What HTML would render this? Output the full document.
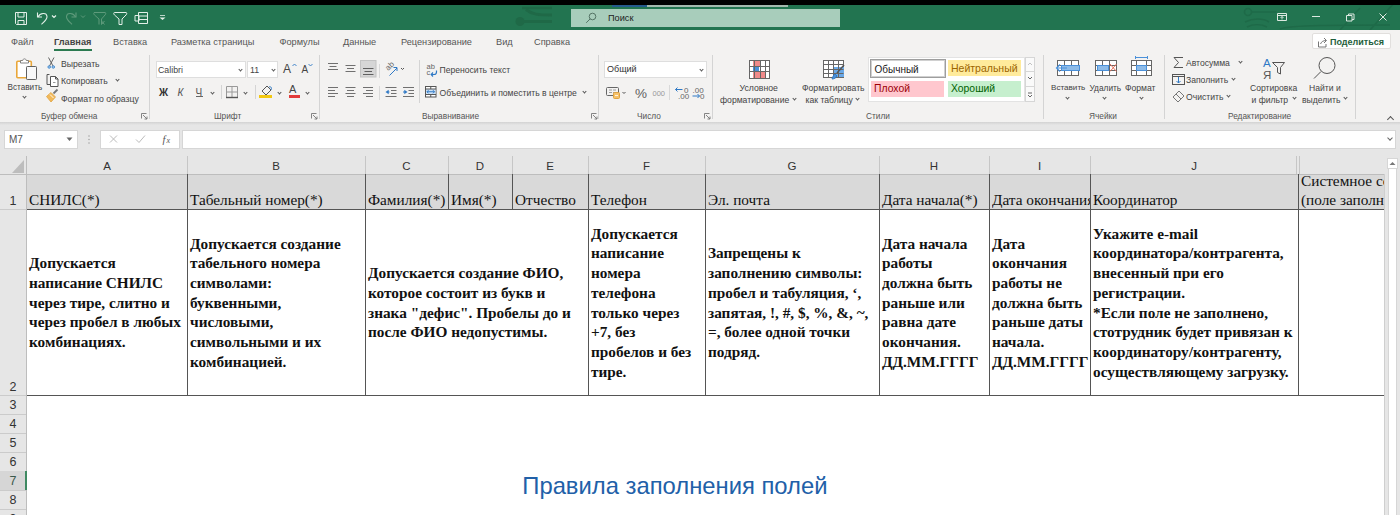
<!DOCTYPE html>
<html><head><meta charset="utf-8">
<style>
*{margin:0;padding:0;box-sizing:border-box}
html,body{width:1400px;height:515px;overflow:hidden;background:#fff;font-family:"Liberation Sans",sans-serif}
.a{position:absolute}
svg{position:absolute;overflow:visible}
.t{position:absolute;white-space:nowrap;color:#444;font-size:8.7px;line-height:10px}
.tab{position:absolute;top:37px;font-size:9.2px;line-height:11px;color:#555;white-space:nowrap}
.gl{position:absolute;top:111px;font-size:8.3px;line-height:10px;color:#555;white-space:nowrap}
.sep{position:absolute;width:1px;background:#d4d4d4}
.ch{position:absolute;width:4px;height:4px;border-right:1px solid #555;border-bottom:1px solid #555;transform:rotate(45deg)}
.cl{position:absolute;top:159px;font-size:11.5px;line-height:14px;color:#333;text-align:center}
.rl{position:absolute;left:0;width:26px;font-size:12.5px;line-height:19px;color:#333;text-align:center;margin-top:1.5px}
.cell{position:absolute;font-family:"Liberation Serif",serif;font-size:15.3px;color:#111;white-space:nowrap;line-height:19.4px}
.b{font-weight:bold}
.cw{position:absolute;top:210px;height:185px;display:flex;align-items:center;font-family:"Liberation Serif",serif;font-size:15.3px;line-height:19.7px;font-weight:bold;color:#111;white-space:nowrap}
</style></head><body>
<!-- top black strip -->
<div class="a" style="left:0;top:0;width:1400px;height:5px;background:#000"></div>
<!-- title bar -->
<div class="a" style="left:0;top:5px;width:1400px;height:25px;background:#227450"></div>
<div class="a" style="left:612px;top:5px;width:35px;height:1.5px;background:#245a8c"></div>
<div class="a" style="left:647px;top:5px;width:141px;height:1.5px;background:#a3b8ad"></div>
<!-- QAT icons -->
<svg style="left:0;top:5px" width="200" height="25" fill="none" stroke="#e3efe8" stroke-width="1">
 <path d="M15.5 7.5h11v12h-10l-1-1z M18 7.5v4.5h6v-4.5 M18 19.5v-4h6v4"/>
 <path d="M37.5 7.5v4.5h4.5" stroke-width="1.1"/><path d="M38 12c2-4 8.5-5 9-0.5c0.3 3-3 5.5-5.5 7.8" stroke-width="1.1"/>
 <path d="M52 10.5l2 2 2-2" stroke-width="1.2"/>
 <g stroke="#5e9a7b"><path d="M76 7.5v4.5h-4.5" stroke-width="1.1"/><path d="M75.5 12c-2-4-8.5-5-9-0.5c-0.3 3 3 5.5 5.5 7.8" stroke-width="1.1"/><path d="M81 10.5l2 2 2-2"/>
 <path d="M94 7.5h11c1 0 1 1.5 0 2.5l-3.5 4v5.5 M99 19.5v-5.5l-4.5-4c-1-1-1-2.5 0-2.5"/><path d="M101.5 16l3 3.5m0-3.5l-3 3.5"/></g>
 <path d="M114.5 7.5h11.5c1 0 1 1.5 0 2.5l-4 4v5.5h-3v-5.5l-4.5-4c-1-1-1-2.5 0-2.5z"/>
 <path d="M138.5 7.5h9v11h-9z M138.5 11h9 M138.5 14.5h9 M135 10.5h4v5.5h-4z"/>
 <path d="M160 10.5h5" stroke-width="0.8"/><path d="M159.5 12.5l3 2.5 3-2.5z" fill="#e3efe8" stroke="none"/>
</svg>
<!-- faint watermark decorations -->
<svg style="left:505px;top:5px" width="60" height="25" fill="none" stroke="#1f6947">
 <circle cx="15" cy="16.5" r="4.5" fill="#1f6947" stroke="none"/><path d="M15 16.5H47" stroke-width="3"/><path d="M17 3H47" stroke-width="2.5"/><path d="M21 4.5C27 9.5 33 10 47 10" stroke-width="3"/>
</svg>
<svg style="left:1230px;top:5px;overflow:hidden" width="170" height="25" fill="none" stroke="#1e6a48" stroke-width="1.6">
 <circle cx="18" cy="7" r="3.5"/><path d="M21.5 7h25 M15 17c8-4 18-4 24 0 M17 22c6-3 14-3 20 0 M50 24c10-4 60-4 110-4 M110 25l20-22 M140 25l25-28"/>
</svg>
<!-- search box -->
<div class="a" style="left:571px;top:9px;width:269px;height:17.5px;background:#a8cdbb"></div>
<svg style="left:584px;top:11px" width="14" height="14" fill="none" stroke="#4b6a5b" stroke-width="0.9"><circle cx="8.5" cy="5.5" r="3.3"/><path d="M6.2 7.8l-4 4"/></svg>
<div class="t" style="left:608px;top:12.5px;font-size:9.2px;color:#222">Поиск</div>
<!-- window controls -->
<svg style="left:1270px;top:5px" width="130" height="25" fill="none" stroke="#dce9e1" stroke-width="1">
 <path d="M7.5 8.5h9v7h-9z M7.5 10.5h9" /><path d="M12 14.5v-3 M10.5 13l1.5-1.5 1.5 1.5" stroke-width="0.9"/>
 <path d="M42 11.5h8"/>
 <path d="M76.5 10.5h5.5v5.5h-5.5z M78.5 10.5v-1.5h5.5v5.5h-2"/>
 <path d="M109.5 8.5l7 7 M116.5 8.5l-7 7"/>
</svg>
<!-- ribbon -->
<div class="a" style="left:0;top:30px;width:1400px;height:92px;background:#f3f2f1"></div>
<div class="tab" style="left:11px">Файл</div>
<div class="tab" style="left:54px;font-weight:bold;color:#444">Главная</div>
<div class="a" style="left:54px;top:49px;width:38px;height:2px;background:#2b7a50"></div>
<div class="tab" style="left:113px">Вставка</div>
<div class="tab" style="left:171px">Разметка страницы</div>
<div class="tab" style="left:279.5px">Формулы</div>
<div class="tab" style="left:343px">Данные</div>
<div class="tab" style="left:401px">Рецензирование</div>
<div class="tab" style="left:496px">Вид</div>
<div class="tab" style="left:534px">Справка</div>
<!-- share -->
<div class="a" style="left:1312px;top:33px;width:79px;height:16px;background:#fff;border:1px solid #e1dfdd;border-radius:2px"></div>
<svg style="left:1317px;top:36px" width="14" height="12" fill="none" stroke="#666" stroke-width="0.9"><path d="M1.5 5.5v5.5h7.5v-3"/><path d="M3.5 8c1-2.5 3-3.5 5.5-3.5 M7 2l2.5 2.5-2.5 2.5"/></svg>
<div class="t" style="left:1330px;top:36.5px;font-size:9px;font-weight:bold;color:#1e5e3a">Поделиться</div>
<!-- separators -->
<div class="sep" style="left:149px;top:55px;height:64px"></div>
<div class="sep" style="left:319px;top:55px;height:64px"></div>
<div class="sep" style="left:598px;top:55px;height:64px"></div>
<div class="sep" style="left:712px;top:55px;height:64px"></div>
<div class="sep" style="left:1043px;top:55px;height:64px"></div>
<div class="sep" style="left:1164px;top:55px;height:64px"></div>
<div class="sep" style="left:1355px;top:55px;height:64px"></div>
<!-- launchers -->
<svg style="left:0;top:111px" width="720" height="10" fill="none" stroke="#777" stroke-width="0.9">
 <path d="M141.5 7.5v-5h5 M143 4l4 4 M147 5.5v2.5h-2.5"/>
 <path d="M311.5 7.5v-5h5 M313 4l4 4 M317 5.5v2.5h-2.5"/>
 <path d="M591.5 7.5v-5h5 M593 4l4 4 M597 5.5v2.5h-2.5"/>
 <path d="M704.5 7.5v-5h5 M706 4l4 4 M710 5.5v2.5h-2.5"/>
</svg>
<!-- CLIPBOARD -->
<svg style="left:0;top:52px" width="150" height="60" fill="none" stroke-width="1">
 <rect x="16.8" y="9.3" width="14.5" height="16.5" rx="1" fill="#fff" stroke="#e9a73a" stroke-width="1.6"/>
 <path d="M20.5 11v-2.5h2.2c0.3-2.2 3.3-2.2 3.6 0h2.2v2.5z" fill="#fff" stroke="#777" stroke-width="0.9"/>
 <rect x="26.5" y="14.5" width="10" height="13" rx="0.8" fill="#f8f8f8" stroke="#606060"/>
 <path d="M48.5 5.5l4.5 8.5 M54 5.5l-4.5 8.5" stroke="#555" stroke-width="0.9"/><circle cx="49.2" cy="15" r="1.3" fill="#9cc3e8" stroke="#3a84cc" stroke-width="0.8"/><circle cx="53.3" cy="15" r="1.3" fill="#9cc3e8" stroke="#3a84cc" stroke-width="0.8"/>
 <path d="M49.5 22.5h-2.5v10h3" stroke="#555"/><path d="M50.5 24.5h5l2.5 2.5v7.5h-7.5z M55.5 24.5v2.5h2.5" stroke="#555" fill="#fff"/><path d="M53 30.5h2.5" stroke="#999"/>
 <path d="M46.5 44.5l4.5-4 4.5 4.5-4.5 5z" fill="#f2b95a" stroke="#e0a341" stroke-width="0.8"/><path d="M50 42.5l3.5 3.5" stroke="#fff" stroke-width="0.9"/><path d="M53.5 41.5l4-4" stroke="#777" stroke-width="1.8"/>
</svg>
<div class="t" style="left:7.5px;top:83px;font-size:8.2px">Вставить</div>
<div class="ch" style="left:23px;top:95px;width:3px;height:3px"></div>
<div class="t" style="left:61px;top:59px">Вырезать</div>
<div class="t" style="left:61px;top:76px">Копировать</div>
<div class="ch" style="left:116px;top:78px;width:3px;height:3px"></div>
<div class="t" style="left:61px;top:93.5px">Формат по образцу</div>
<div class="gl" style="left:41px">Буфер обмена</div>
<!-- FONT -->
<div class="a" style="left:156px;top:61px;width:90px;height:17px;background:#fff;border:1px solid #dedede"></div>
<div class="t" style="left:158px;top:64.5px;font-size:8.8px;color:#444">Calibri</div>
<div class="ch" style="left:239px;top:67.5px;width:3px;height:3px"></div>
<div class="a" style="left:247px;top:61px;width:31px;height:17px;background:#fff;border:1px solid #dedede"></div>
<div class="t" style="left:250px;top:64.5px;font-size:8.8px;color:#444">11</div>
<div class="ch" style="left:272px;top:67.5px;width:3px;height:3px"></div>
<div class="t" style="left:283px;top:62px;font-size:12px;line-height:14px;color:#444">A</div>
<svg style="left:292px;top:63px" width="6" height="4" fill="none" stroke="#2f79c5" stroke-width="0.9"><path d="M0.5 3l2-2 2 2"/></svg>
<div class="t" style="left:301.5px;top:64px;font-size:10px;line-height:12px;color:#444">A</div>
<svg style="left:308px;top:63px" width="6" height="4" fill="none" stroke="#2f79c5" stroke-width="0.9"><path d="M0.5 1l2 2 2-2"/></svg>
<div class="t" style="left:159px;top:86px;font-size:10px;line-height:13px;font-weight:bold;color:#333">Ж</div>
<div class="t" style="left:177.5px;top:86px;font-size:10px;line-height:13px;font-style:italic;color:#555">К</div>
<div class="t" style="left:195.5px;top:85.5px;font-size:10px;line-height:13px;color:#555">Ч</div>
<div class="a" style="left:195.5px;top:96px;width:7px;height:1px;background:#666"></div>
<div class="ch" style="left:211px;top:90.5px;width:3px;height:3px"></div>
<div class="sep" style="left:221px;top:85px;height:14px"></div>
<svg style="left:225px;top:85px" width="14" height="14" fill="none" stroke="#999" stroke-width="1"><path d="M1.5 1.5h11v11 M1.5 1.5v11 M7 1.5v11 M1.5 7h11"/><path d="M1 12.5h12" stroke="#555" stroke-width="1.4"/></svg>
<div class="ch" style="left:244px;top:90.5px;width:3px;height:3px"></div>
<div class="sep" style="left:255px;top:85px;height:14px"></div>
<svg style="left:258px;top:83px" width="16" height="16" fill="none" stroke-width="1"><path d="M4 8l5-5 4 4-5 5z" stroke="#555"/><path d="M11 4c2-1 3 1 2 3" stroke="#2f79c5"/><rect x="1" y="12" width="13" height="3" fill="#f2c811" stroke="none"/></svg>
<div class="ch" style="left:277.5px;top:90.5px;width:3px;height:3px"></div>
<div class="t" style="left:289px;top:83px;font-size:11px;line-height:12px;color:#444">A</div>
<div class="a" style="left:288.5px;top:95px;width:11.5px;height:3px;background:#e23b3b"></div>
<div class="ch" style="left:306px;top:90.5px;width:3px;height:3px"></div>
<div class="gl" style="left:214px">Шрифт</div>
<!-- ALIGNMENT -->
<svg style="left:320px;top:56px" width="100" height="48" fill="none" stroke="#707070" stroke-width="1">
 <path d="M8 7.5h10 M9.5 10.5h7 M8 13.5h10"/>
 <path d="M25.5 9.5h10 M27 12.5h7 M25.5 15.5h10"/>
 <rect x="40.5" y="4.5" width="15.5" height="16.5" fill="#d6d6d6" stroke="#c2c2c2"/>
 <path d="M43 12.5h10.5 M44.5 15.5h7.5 M43 18.5h10.5" stroke="#606060"/>
 <path d="M8 31.5h10 M8 34.5h7 M8 37.5h10 M8 40.5h7"/>
 <path d="M25.5 31.5h10 M27 34.5h7 M25.5 37.5h10 M27 40.5h7"/>
 <path d="M43 31.5h10 M46 34.5h7 M43 37.5h10 M46 40.5h7"/>
 <path d="M59.5 8v14 M59.5 30v14" stroke="#d9d9d9"/>
 <g transform="rotate(-45 70 9)"><text x="64.5" y="12" font-size="8" fill="#666" stroke="none" font-family="Liberation Sans">ab</text></g>
 <path d="M69.5 19.5l7.5-7.5 M73.5 11.5h3.5v3.5" stroke="#2f79c5"/>
 <path d="M81 12l1.5 1.5 1.5-1.5" stroke="#555"/>
 <path d="M65.5 31.5h11 M71 34.5h5.5 M71 37.5h5.5 M65.5 40.5h11"/><path d="M65.5 36l3.2-2.2v4.4z" fill="#2f79c5" stroke="none"/><path d="M68 36h1.5" stroke="#2f79c5"/>
 <path d="M83 31.5h11 M88.5 34.5h5.5 M88.5 37.5h5.5 M83 40.5h11"/><path d="M87.5 36l-3.2-2.2v4.4z" fill="#2f79c5" stroke="none"/><path d="M83 36h2" stroke="#2f79c5"/>
</svg>
<div class="sep" style="left:419px;top:60px;height:43px"></div>
<svg style="left:424px;top:56px" width="20" height="48" fill="none" stroke-width="1">
 <text x="2.5" y="12.8" font-size="7.5" fill="#666" stroke="none" font-family="Liberation Sans">ab</text>
 <text x="2.5" y="18.5" font-size="7.5" fill="#666" stroke="none" font-family="Liberation Sans">c</text>
 <path d="M12.5 14.5v1.5c0 1.5-1 2.5-2.5 2.5h-2.5 M9 16.5l-1.8 2 1.8 2" stroke="#2f79c5" stroke-width="1.2"/>
 <rect x="1.5" y="30.5" width="10.5" height="10.5" stroke="#555" fill="#fff"/><rect x="2" y="33" width="9.5" height="5" fill="#cfe3f7" stroke="none"/><path d="M1.5 33h10.5 M1.5 38.5h10.5 M6.75 30.5v2.5 M6.75 38.5v2.5" stroke="#555"/><path d="M3 35.75h7.5 M4.5 34.2l-1.5 1.55 1.5 1.55 M9 34.2l1.5 1.55-1.5 1.55" stroke="#2f79c5"/>
</svg>
<div class="t" style="left:439.5px;top:64.5px;font-size:8.6px">Переносить текст</div>
<div class="t" style="left:439.5px;top:88px;font-size:8.6px">Объединить и поместить в центре</div>
<div class="ch" style="left:583px;top:90px;width:3px;height:3px"></div>
<div class="gl" style="left:422px">Выравнивание</div>
<!-- NUMBER -->
<div class="a" style="left:604px;top:61px;width:103px;height:17px;background:#fff;border:1px solid #dedede"></div>
<div class="t" style="left:607px;top:64px;font-size:9px;color:#333">Общий</div>
<div class="ch" style="left:700px;top:67.5px;width:3px;height:3px"></div>
<svg style="left:604px;top:84px" width="105" height="18" fill="none" stroke-width="1">
 <rect x="2.5" y="3.5" width="12" height="8" rx="1" stroke="#666"/><path d="M5 6h3 M5 8.5h3 M9 6h3 M9 8.5h3" stroke="#888" stroke-width="0.8"/>
 <rect x="9.5" y="8.5" width="6" height="6" rx="1" fill="#f6c26b" stroke="#e0a341"/><path d="M11 11.5h3" stroke="#fff" stroke-width="0.8"/>
 <path d="M18.5 8l1.5 1.5 1.5-1.5" stroke="#555"/>
 <text x="31" y="13.5" font-size="13.5" fill="#606060" stroke="none" font-family="Liberation Sans">%</text>
 <text x="48.5" y="12" font-size="7.5" fill="#999" stroke="none" font-family="Liberation Sans">000</text>
 <path d="M65.5 1v15" stroke="#d9d9d9"/>
 <text x="80" y="8.5" font-size="8" fill="#666" stroke="none" font-family="Liberation Sans">0</text>
 <text x="74" y="15" font-size="8" fill="#666" stroke="none" font-family="Liberation Sans">.00</text>
 <path d="M71.5 5.5h7 M73.5 3.5l-2 2 2 2" stroke="#2f79c5"/>
 <text x="88.5" y="8.5" font-size="8" fill="#666" stroke="none" font-family="Liberation Sans">.00</text>
 <text x="96" y="15" font-size="8" fill="#666" stroke="none" font-family="Liberation Sans">0</text>
 <path d="M88.5 12h7 M93.5 10l2 2-2 2" stroke="#2f79c5"/>
</svg>
<div class="gl" style="left:637px">Число</div>
<!-- STYLES -->
<svg style="left:745.5px;top:58.5px" width="30" height="22" fill="none" stroke-width="1">
 <rect x="3.5" y="1.5" width="20" height="18" fill="#fff" stroke="#666"/>
 <rect x="7" y="2" width="8" height="5" fill="#f08a8a" stroke="none"/>
 <rect x="7" y="13" width="12" height="6" fill="#f08a8a" stroke="none"/>
 <rect x="7" y="8" width="6" height="4" fill="#4a90d9" stroke="none"/>
 <path d="M3.5 7.5h20 M3.5 12.5h20 M8.5 1.5v18 M14.5 1.5v18 M19.5 1.5v18" stroke="#666"/>
</svg>
<div class="t" style="left:739.5px;top:83px;font-size:8.7px">Условное</div>
<div class="t" style="left:720px;top:94.5px;font-size:8.65px">форматирование</div>
<div class="ch" style="left:793px;top:97px;width:3px;height:3px"></div>
<svg style="left:822px;top:59px" width="30" height="24" fill="none" stroke-width="1">
 <rect x="1.5" y="1.5" width="20" height="17" fill="#fff" stroke="#666"/>
 <rect x="11" y="8" width="11" height="10" fill="#6aa9e8" stroke="none"/>
 <path d="M1.5 5.5h20 M1.5 10.5h20 M1.5 14.5h20 M6.5 1.5v17 M11.5 1.5v17 M16.5 1.5v17" stroke="#666"/>
 <path d="M22 6l-7 8" stroke="#555" stroke-width="1.5"/><path d="M13 15c-2 1-2 3-3 5 2 0 4-1 5-3z" fill="#4a90d9" stroke="#2f79c5"/>
</svg>
<div class="t" style="left:802px;top:83px;font-size:8.65px">Форматировать</div>
<div class="t" style="left:805.5px;top:94.5px;font-size:8.65px">как таблицу</div>
<div class="ch" style="left:856px;top:97px;width:3px;height:3px"></div>
<div class="a" style="left:868px;top:57px;width:157px;height:45px;background:#fff;border:1px solid #e3e3e3"></div>
<div class="a" style="left:870px;top:59px;width:76px;height:19px;background:#fff;border:1px solid #9e9e9e;box-shadow:inset 0 0 0 1px #d0d0d0"></div>
<div class="t" style="left:874.5px;top:63.5px;font-size:10px;line-height:12px;color:#222">Обычный</div>
<div class="a" style="left:948px;top:60px;width:73px;height:16px;background:#ffeb9c"></div>
<div class="t" style="left:951px;top:62px;font-size:10.5px;line-height:12px;color:#9c6500">Нейтральный</div>
<div class="a" style="left:871px;top:81px;width:73px;height:16px;background:#ffc7ce"></div>
<div class="t" style="left:874px;top:83px;font-size:10.4px;line-height:12px;color:#9c0006">Плохой</div>
<div class="a" style="left:948px;top:81px;width:73px;height:16px;background:#c6efce"></div>
<div class="t" style="left:951px;top:83px;font-size:10.4px;line-height:12px;color:#006100">Хороший</div>
<div class="a" style="left:1025px;top:57px;width:10px;height:45px;background:#fafafa;border:1px solid #d6d6d6"></div>
<div class="a" style="left:1025px;top:71px;width:10px;height:1px;background:#d6d6d6"></div>
<div class="a" style="left:1025px;top:86px;width:10px;height:1px;background:#d6d6d6"></div>
<svg style="left:1025px;top:57px" width="10" height="45" fill="none" stroke="#bbb" stroke-width="0.9"><path d="M3 8l2-2 2 2"/><path d="M3 20l2 2 2-2" stroke="#555"/><path d="M3 36h4 M3 38l2 2 2-2" stroke="#555"/></svg>
<div class="gl" style="left:866px">Стили</div>
<!-- CELLS -->
<svg style="left:1050px;top:55px" width="110" height="24" fill="none" stroke-width="1">
 <rect x="7.5" y="5.5" width="21" height="15" fill="#fff" stroke="#666"/>
 <path d="M7.5 10.5h21 M7.5 15.5h21 M14.5 5.5v15 M21.5 5.5v15" stroke="#666"/>
 <rect x="11.5" y="10.5" width="18" height="5" fill="#8dbbe8" stroke="#4a90d9"/>
 <path d="M17 13h-10 M10 9.5l-3.5 3.5 3.5 3.5" stroke="#4a90d9" stroke-width="1.2"/>
 <rect x="45.5" y="5.5" width="21" height="15" fill="#fff" stroke="#666"/>
 <path d="M45.5 10.5h21 M45.5 15.5h21 M52.5 5.5v15 M59.5 5.5v15" stroke="#666"/>
 <rect x="47.5" y="10.5" width="11" height="5" fill="#8dbbe8" stroke="#4a90d9"/>
 <path d="M60 9l6.5 7.5 M66.5 9l-6.5 7.5" stroke="#e8705a" stroke-width="1"/>
 <rect x="81.5" y="5.5" width="20" height="15" fill="#fff" stroke="#666"/>
 <path d="M81.5 10.5h20 M81.5 15.5h20 M86.5 5.5v15 M96.5 5.5v15" stroke="#666"/>
 <rect x="86.5" y="10.5" width="10" height="5" fill="#8dbbe8" stroke="#4a90d9"/>
 <path d="M85 2.5h13 M85.5 1v3 M97.5 1v3" stroke="#4a90d9"/>
</svg>
<div class="t" style="left:1051px;top:83px;font-size:8.1px">Вставить</div>
<div class="t" style="left:1089.5px;top:83px;font-size:8.3px">Удалить</div>
<div class="t" style="left:1125px;top:83px;font-size:8.6px">Формат</div>
<div class="ch" style="left:1066px;top:96px;width:3px;height:3px"></div>
<div class="ch" style="left:1103px;top:96px;width:3px;height:3px"></div>
<div class="ch" style="left:1140px;top:96px;width:3px;height:3px"></div>
<div class="gl" style="left:1089px">Ячейки</div>
<!-- EDITING -->
<svg style="left:1170px;top:55px" width="170" height="50" fill="none" stroke-width="1">
 <path d="M13 2.5h-9l4.5 5-4.5 5h9" stroke="#555"/>
 <rect x="2.5" y="19.5" width="12" height="10" stroke="#555"/><path d="M2.5 21.5h12" stroke="#555"/><path d="M8.5 22v6 M6.5 26l2 2 2-2" stroke="#2f79c5"/>
 <path d="M3 42l6-6 5 5-6 6z M6 39l5 5" stroke="#777"/>
 <text x="93" y="11.5" font-size="11.5" fill="#2f79c5" stroke="none" font-family="Liberation Sans">A</text>
 <text x="93" y="23.5" font-size="11.5" fill="#555" stroke="none" font-family="Liberation Sans">Я</text>
 <path d="M102.5 7.5h12l-4 5v6.5l-3-1.5v-5z" stroke="#555"/>
 <circle cx="157" cy="10.5" r="8" stroke="#555"/><path d="M151 16.5l-7 7" stroke="#555"/>
</svg>
<div class="t" style="left:1186px;top:58px;font-size:8.6px">Автосумма</div>
<div class="ch" style="left:1239px;top:60px;width:3px;height:3px"></div>
<div class="t" style="left:1186px;top:75px;font-size:8.6px">Заполнить</div>
<div class="ch" style="left:1232px;top:77px;width:3px;height:3px"></div>
<div class="t" style="left:1186px;top:92px;font-size:8.6px">Очистить</div>
<div class="ch" style="left:1227px;top:94px;width:3px;height:3px"></div>
<div class="t" style="left:1250px;top:83px;font-size:8.6px">Сортировка</div>
<div class="t" style="left:1251.5px;top:95px;font-size:8.6px">и фильтр</div>
<div class="ch" style="left:1293px;top:96px;width:3px;height:3px"></div>
<div class="t" style="left:1309px;top:83px;font-size:8.6px">Найти и</div>
<div class="t" style="left:1302px;top:95px;font-size:8.6px">выделить</div>
<div class="ch" style="left:1344px;top:96px;width:3px;height:3px"></div>
<div class="gl" style="left:1228px">Редактирование</div>
<div class="ch" style="left:1388px;top:116.5px;width:5px;height:5px;transform:rotate(225deg)"></div>
<!-- FORMULA BAR -->
<div class="a" style="left:0;top:122px;width:1400px;height:34px;background:#e6e6e6"></div>
<div class="a" style="left:0;top:122px;width:1400px;height:3px;background:linear-gradient(#d2d2d2,#e6e6e6)"></div>
<div class="a" style="left:4px;top:130px;width:74px;height:19px;background:#fff;border:1px solid #d6d6d6"></div>
<div class="t" style="left:9px;top:134.5px;font-size:10px;color:#555">M7</div>
<svg style="left:66px;top:137px" width="8" height="5"><path d="M0.5 0.5h6l-3 3.5z" fill="#666"/></svg>
<svg style="left:87px;top:133px" width="4" height="14"><circle cx="2" cy="3" r="0.7" fill="#999"/><circle cx="2" cy="6.5" r="0.7" fill="#999"/><circle cx="2" cy="10" r="0.7" fill="#999"/></svg>
<div class="a" style="left:100px;top:130px;width:80px;height:19px;background:#fff;border:1px solid #d6d6d6"></div>
<svg style="left:100px;top:130px" width="80" height="19" fill="none" stroke-width="1">
 <path d="M10 5.5l7 7 M17 5.5l-7 7" stroke="#bbb"/>
 <path d="M36 9.5l3 3 6-7" stroke="#bbb"/>
 <text x="62.5" y="13" font-size="10.5" font-style="italic" fill="#555" stroke="none" font-family="Liberation Serif">f</text>
 <text x="66.5" y="13" font-size="8" font-style="italic" fill="#555" stroke="none" font-family="Liberation Serif">x</text>
</svg>
<div class="a" style="left:182px;top:130px;width:1214px;height:19px;background:#fff;border:1px solid #d6d6d6"></div>
<div class="ch" style="left:1388px;top:136px;width:4px;height:4px;border-color:#666"></div>
<!-- HEADERS -->
<div class="a" style="left:0;top:156px;width:1384px;height:18px;background:#e6e6e6"></div>
<div class="a" style="left:0;top:174px;width:27px;height:341px;background:#e6e6e6"></div>
<svg style="left:0;top:156px" width="27" height="18"><path d="M24 4v13h-12z" fill="#bdbdbd"/></svg>
<div class="a" style="left:26px;top:156px;width:1px;height:359px;background:#bdbdbd"></div>
<div class="a" style="left:0;top:174px;width:1384px;height:1px;background:#bdbdbd"></div>
<!-- column separators in header -->
<div class="a" style="left:187px;top:156px;width:1px;height:18px;background:#c6c6c6"></div>
<div class="a" style="left:365px;top:156px;width:1px;height:18px;background:#c6c6c6"></div>
<div class="a" style="left:448px;top:156px;width:1px;height:18px;background:#c6c6c6"></div>
<div class="a" style="left:512px;top:156px;width:1px;height:18px;background:#c6c6c6"></div>
<div class="a" style="left:588px;top:156px;width:1px;height:18px;background:#c6c6c6"></div>
<div class="a" style="left:705px;top:156px;width:1px;height:18px;background:#c6c6c6"></div>
<div class="a" style="left:879px;top:156px;width:1px;height:18px;background:#c6c6c6"></div>
<div class="a" style="left:989px;top:156px;width:1px;height:18px;background:#c6c6c6"></div>
<div class="a" style="left:1090px;top:156px;width:1px;height:18px;background:#c6c6c6"></div>
<div class="a" style="left:1296px;top:156px;width:1px;height:18px;background:#c6c6c6"></div>
<div class="a" style="left:1299px;top:156px;width:1px;height:18px;background:#c6c6c6"></div>
<div class="cl" style="left:27px;width:160px">A</div>
<div class="cl" style="left:187px;width:178px">B</div>
<div class="cl" style="left:365px;width:83px">C</div>
<div class="cl" style="left:448px;width:64px">D</div>
<div class="cl" style="left:512px;width:76px">E</div>
<div class="cl" style="left:588px;width:117px">F</div>
<div class="cl" style="left:705px;width:174px">G</div>
<div class="cl" style="left:879px;width:110px">H</div>
<div class="cl" style="left:989px;width:101px">I</div>
<div class="cl" style="left:1090px;width:208px">J</div>
<!-- row header separators -->
<div class="a" style="left:0;top:209px;width:26px;height:1px;background:#cbcbcb"></div>
<div class="a" style="left:0;top:395px;width:26px;height:1px;background:#cbcbcb"></div>
<div class="a" style="left:0;top:414px;width:26px;height:1px;background:#cbcbcb"></div>
<div class="a" style="left:0;top:433px;width:26px;height:1px;background:#cbcbcb"></div>
<div class="a" style="left:0;top:452px;width:26px;height:1px;background:#cbcbcb"></div>
<div class="a" style="left:0;top:471px;width:26px;height:1px;background:#cbcbcb"></div>
<div class="a" style="left:0;top:471px;width:26px;height:19px;background:#d6d6d6"></div>
<div class="a" style="left:25px;top:471px;width:2px;height:19px;background:#3f8a62"></div>
<div class="a" style="left:0;top:490px;width:26px;height:1px;background:#cbcbcb"></div>
<div class="a" style="left:0;top:509px;width:26px;height:1px;background:#cbcbcb"></div>
<div class="rl" style="top:190px">1</div>
<div class="rl" style="top:376px">2</div>
<div class="rl" style="top:394.5px">3</div>
<div class="rl" style="top:413.5px">4</div>
<div class="rl" style="top:432.5px">5</div>
<div class="rl" style="top:451.5px">6</div>
<div class="rl" style="top:470.5px;color:#3b5a4c">7</div>
<div class="rl" style="top:489.5px">8</div>
<div class="rl" style="top:508.5px">9</div>
<!-- ROW 1 -->
<div class="a" style="left:27px;top:175px;width:1357px;height:34px;background:#d9d9d9"></div>
<!-- borders -->
<div class="a" style="left:27px;top:209px;width:1357px;height:1px;background:#555"></div>
<div class="a" style="left:27px;top:395px;width:1357px;height:1px;background:#555"></div>
<div class="a" style="left:187px;top:174px;width:1px;height:222px;background:#555"></div>
<div class="a" style="left:365px;top:174px;width:1px;height:222px;background:#555"></div>
<div class="a" style="left:448px;top:174px;width:1px;height:36px;background:#555"></div>
<div class="a" style="left:512px;top:174px;width:1px;height:36px;background:#555"></div>
<div class="a" style="left:588px;top:174px;width:1px;height:222px;background:#555"></div>
<div class="a" style="left:705px;top:174px;width:1px;height:222px;background:#555"></div>
<div class="a" style="left:879px;top:174px;width:1px;height:222px;background:#555"></div>
<div class="a" style="left:989px;top:174px;width:1px;height:222px;background:#555"></div>
<div class="a" style="left:1090px;top:174px;width:1px;height:222px;background:#555"></div>
<div class="a" style="left:1298px;top:174px;width:1px;height:222px;background:#555"></div>
<!-- row1 text -->
<div class="cell" style="left:29px;top:190px">СНИЛС(*)</div>
<div class="cell" style="left:190px;top:190px">Табельный номер(*)</div>
<div class="cell" style="left:368px;top:190px">Фамилия(*)</div>
<div class="cell" style="left:451px;top:190px">Имя(*)</div>
<div class="cell" style="left:515px;top:190px">Отчество</div>
<div class="cell" style="left:591px;top:190px">Телефон</div>
<div class="cell" style="left:708px;top:190px">Эл. почта</div>
<div class="cell" style="left:882px;top:190px">Дата начала(*)</div>
<div class="cell" style="left:992px;top:190px;width:98px;overflow:hidden">Дата окончания(*)</div>
<div class="cell" style="left:1093px;top:190px">Координатор</div>
<div class="cell" style="left:1301px;top:171px;width:83px;overflow:hidden">Системное содержимое<br>(поле заполняется)</div>
<!-- ROW 2 -->
<div class="cw" style="left:29px"><div>Допускается<br>написание СНИЛС<br>через тире, слитно и<br>через пробел в любых<br>комбинациях.</div></div>
<div class="cw" style="left:190px"><div>Допускается создание<br>табельного номера<br>символами:<br>буквенными,<br>числовыми,<br>символьными и их<br>комбинацией.</div></div>
<div class="cw" style="left:368px"><div>Допускается создание ФИО,<br>которое состоит из букв и<br>знака "дефис". Пробелы до и<br>после ФИО недопустимы.</div></div>
<div class="cw" style="left:591px"><div>Допускается<br>написание<br>номера<br>телефона<br>только через<br>+7, без<br>пробелов и без<br>тире.</div></div>
<div class="cw" style="left:708px"><div>Запрещены к<br>заполнению символы:<br>пробел и табуляция, ‘,<br>запятая, !, #, $, %, &amp;, ~,<br>=, более одной точки<br>подряд.</div></div>
<div class="cw" style="left:882px"><div>Дата начала<br>работы<br>должна быть<br>раньше или<br>равна дате<br>окончания.<br>ДД.ММ.ГГГГ</div></div>
<div class="cw" style="left:992px"><div>Дата<br>окончания<br>работы не<br>должна быть<br>раньше даты<br>начала.<br>ДД.ММ.ГГГГ</div></div>
<div class="cw" style="left:1093px"><div>Укажите e-mail<br>координатора/контрагента,<br>внесенный при его<br>регистрации.<br>*Если поле не заполнено,<br>стотрудник будет привязан к<br>координатору/контрагенту,<br>осуществляющему загрузку.</div></div>
<!-- title -->
<div class="a" style="left:522.3px;top:472px;font-size:23.8px;line-height:28px;color:#2160a8;white-space:nowrap">Правила заполнения полей</div>
<!-- SCROLLBAR -->
<div class="a" style="left:1384px;top:156px;width:16px;height:359px;background:#e6e6e6"></div>
<div class="a" style="left:1384px;top:174px;width:1px;height:341px;background:#cfcfcf"></div>
<div class="a" style="left:1388px;top:158px;width:9px;height:357px;background:#fff;border-left:1px solid #d6d6d6;border-right:1px solid #d6d6d6"></div>
<div class="a" style="left:1387px;top:158px;width:11px;height:11px;background:#fff;border:1px solid #d6d6d6"></div>
<svg style="left:1387px;top:158px" width="11" height="11"><path d="M2.5 7l3-3 3 3z" fill="#777"/></svg>
</body></html>
